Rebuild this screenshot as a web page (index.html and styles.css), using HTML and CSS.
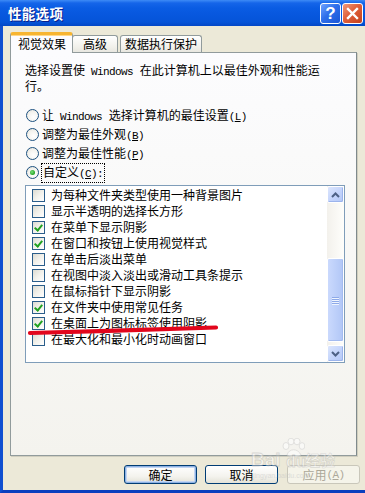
FILE: index.html
```html
<!DOCTYPE html>
<html lang="zh-CN">
<head>
<meta charset="utf-8">
<title>性能选项</title>
<link rel="stylesheet" href="styles.css">
</head>
<body>
<div class="window">
  <header class="titlebar">
    <span class="title">性能选项</span>
    <div class="caption-btns">
      <span class="cap-btn help">?</span>
      <span class="cap-btn close"><svg width="13" height="13" viewBox="0 0 13 13"><path d="M2 2 L11 11 M11 2 L2 11" stroke="#fff" stroke-width="2.4" stroke-linecap="square"/></svg></span>
    </div>
  </header>
  <main class="client">
    <nav class="tabs">
      <span class="tab active">视觉效果</span>
      <span class="tab t2">高级</span>
      <span class="tab t3">数据执行保护</span>
    </nav>
    <section class="panel">
      <p class="desc">选择设置使<span class="lat sp">Windows</span>在此计算机上以最佳外观和性能运行。</p>
      <div class="radios">
        <div class="radio"><span class="rb"></span><span class="rl">让<span class="lat sp">Windows</span>选择计算机的最佳设置<span class="lat">(<u>L</u>)</span></span></div>
        <div class="radio"><span class="rb"></span><span class="rl">调整为最佳外观<span class="lat">(<u>B</u>)</span></span></div>
        <div class="radio"><span class="rb"></span><span class="rl">调整为最佳性能<span class="lat">(<u>P</u>)</span></span></div>
        <div class="radio"><span class="rb on"></span><span class="rl focus">自定义<span class="lat">(<u>C</u>):</span></span></div>
      </div>
      <div class="listbox">
        <ul class="items">
          <li class="item"><span class="cb"></span>为每种文件夹类型使用一种背景图片</li>
          <li class="item"><span class="cb"></span>显示半透明的选择长方形</li>
          <li class="item"><span class="cb on"></span>在菜单下显示阴影</li>
          <li class="item"><span class="cb on"></span>在窗口和按钮上使用视觉样式</li>
          <li class="item"><span class="cb"></span>在单击后淡出菜单</li>
          <li class="item"><span class="cb"></span>在视图中淡入淡出或滑动工具条提示</li>
          <li class="item"><span class="cb"></span>在鼠标指针下显示阴影</li>
          <li class="item"><span class="cb on"></span>在文件夹中使用常见任务</li>
          <li class="item"><span class="cb on"></span>在桌面上为图标标签使用阴影</li>
          <li class="item"><span class="cb"></span>在最大化和最小化时动画窗口</li>
        </ul>
        <div class="scrollbar">
          <span class="sb-btn"><svg width="9" height="6" viewBox="0 0 9 6"><path d="M1 5 L4.5 1.5 L8 5" fill="none" stroke="#4D6185" stroke-width="2"/></svg></span>
          <span class="sb-gap"></span>
          <span class="sb-thumb"><i></i><i></i><i></i><i></i></span>
          <span class="sb-rest"></span>
          <span class="sb-btn"><svg width="9" height="6" viewBox="0 0 9 6"><path d="M1 1 L4.5 4.5 L8 1" fill="none" stroke="#4D6185" stroke-width="2"/></svg></span>
        </div>
      </div>
    </section>
    <footer class="buttons">
      <span class="btn default">确定</span>
      <span class="btn">取消</span>
      <span class="btn disabled">应用<span class="lat">(<u>A</u>)</span></span>
    </footer>
  </main>
  <div class="watermark">
    <span class="wm-bai">Bai</span>
    <svg class="wm-paw" width="24" height="20" viewBox="0 0 24 20"><g fill="#fff" stroke="#cfcfcf" stroke-width="1"><ellipse cx="5" cy="8" rx="3" ry="3.5"/><ellipse cx="10" cy="3.5" rx="3" ry="3.3"/><ellipse cx="16" cy="3.5" rx="3" ry="3.3"/><ellipse cx="21" cy="8" rx="2.8" ry="3.4"/><path d="M6 17 C8 10 17 10 20 17 C17 20 9 20 6 17 Z"/></g></svg>
    <span class="wm-du">du</span>
    <span class="wm-jy">经验</span>
    <span class="wm-url">jingyan.baidu.com</span>
  </div>
  <svg class="annot" width="365" height="493" viewBox="0 0 365 493"><path d="M30 333 C 90 331.5, 160 329.5, 216 327.5" fill="none" stroke="#E2061C" stroke-width="4.2" stroke-linecap="round"/></svg>
</div>
</body>
</html>
```

FILE: styles.css
```css
* { box-sizing: border-box; }
html, body { margin: 0; padding: 0; }
body {
  width: 365px;
  height: 493px;
  overflow: hidden;
  background: #ECE9D8;
  font-family: "Noto Sans CJK SC", "Noto Sans", sans-serif;
  font-size: 12px;
  color: #000;
}
.window {
  position: relative;
  width: 365px;
  height: 493px;
  background: #ECE9D8;
  border-left: 3px solid #0F4FD0;
  border-bottom: 3px solid #0A3FBE;
  display: flex;
  flex-direction: column;
}
.titlebar {
  height: 26px;
  margin-left: -3px;
  flex: none;
  display: flex;
  align-items: center;
  justify-content: space-between;
  padding: 0 2px 0 8px;
  background: linear-gradient(#3D8BF6 0, #1565E9 3px, #0A5CE3 8px, #0757DE 15px, #0554D8 22px, #0347C6 26px);
}
.title {
  color: #fff;
  font-weight: bold;
  font-size: 13.5px;
  line-height: 16px;
  letter-spacing: 0.3px;
  text-shadow: 1px 1px 0 #0A1F8A;
}
.caption-btns { display: flex; gap: 1px; }
.cap-btn {
  width: 21px;
  height: 21px;
  border: 1px solid #fff;
  border-radius: 3px;
  display: flex;
  align-items: center;
  justify-content: center;
  color: #fff;
}
.help {
  background: linear-gradient(135deg, #6FA3FF 0%, #2E6FEA 45%, #1A55D6 100%);
  font-family: "Liberation Sans", sans-serif;
  font-weight: bold;
  font-size: 17px;
  line-height: 19px;
}
.close {
  background: linear-gradient(135deg, #F09A7A 0%, #E0603A 45%, #C4401B 100%);
}
.client {
  flex: 1;
  display: flex;
  flex-direction: column;
  padding: 6px 0 0 7px;
}
.tabs {
  display: flex;
  align-items: flex-end;
  height: 20px;
  position: relative;
  z-index: 2;
}
.tab {
  height: 17px;
  border: 1px solid #919B9C;
  border-bottom: none;
  border-radius: 3px 3px 0 0;
  background: linear-gradient(#FFFFFF, #F1F0EA 70%, #E8E7E0);
  line-height: 16px;
  text-align: center;
  font-size: 12px;
}
.tab.active {
  width: 63px;
  height: 21px;
  margin-bottom: -1px;
  background: #FCFCFE;
  border-top: 3px solid #F7B531;
  line-height: 18px;
  padding-left: 1px;
  box-shadow: inset 0 1px 0 #FFD888;
}
.t2 { width: 46px; margin-left: -1px; }
.t3 { width: 82px; margin-left: 2px; }
.panel {
  width: 347px;
  height: 404px;
  border: 1px solid #919B9C;
  border-right-color: #7F8A8C;
  box-shadow: 1px 1px 0 #D0CEBF;
  background: linear-gradient(#FCFCFE, #F8F8F6 50%, #F4F3EE);
  padding: 10px 0 0 14px;
  position: relative;
  z-index: 1;
}
.lat {
  font-family: "Liberation Mono", monospace;
  font-size: 11px;
  letter-spacing: -0.6px;
  white-space: nowrap;
}
.lat.sp { margin: 0 6.6px 0 6px; }
.desc {
  margin: 0;
  width: 300px;
  line-height: 14px;
}
.radios {
  margin-top: 13px;
  display: flex;
  flex-direction: column;
}
.radio {
  height: 19px;
  display: flex;
  align-items: center;
  padding-left: 1px;
  line-height: 16px;
}
.rb {
  width: 13px;
  height: 13px;
  border-radius: 50%;
  border: 1px solid #1C5180;
  background: radial-gradient(circle at 60% 65%, #FFFFFF 0, #F4F3EE 55%, #DCDBD2 100%);
  margin-right: 3px;
  flex: none;
  display: flex;
  align-items: center;
  justify-content: center;
}
.rb.on::after {
  content: "";
  width: 5px;
  height: 5px;
  border-radius: 50%;
  background: radial-gradient(circle at 40% 40%, #7BE07B, #21A121 70%, #1A8A1A);
}
.focus {
  outline: 1px dotted #000;
  outline-offset: 0;
  padding: 0 1px;
}
.listbox {
  margin-top: 3px;
  width: 320px;
  height: 178px;
  border: 1px solid #7F9DB9;
  background: #fff;
  display: flex;
}
.items {
  list-style: none;
  margin: 0;
  padding: 1px 0 0 6px;
  flex: 1;
}
.item {
  height: 16px;
  display: flex;
  align-items: center;
  line-height: 16px;
  white-space: nowrap;
}
.cb {
  width: 13px;
  height: 13px;
  border: 1px solid #2A5D8A;
  background: linear-gradient(135deg, #DCDBD2 0%, #F2F1EB 50%, #FFFFFF 100%);
  margin-right: 6px;
  flex: none;
  position: relative;
}
.cb.on::after {
  content: "";
  position: absolute;
  left: 3px;
  top: 1px;
  width: 3px;
  height: 6px;
  border-right: 2px solid #21A121;
  border-bottom: 2px solid #21A121;
  transform: rotate(40deg);
}
.scrollbar {
  width: 17px;
  flex: none;
  display: flex;
  flex-direction: column;
  background: linear-gradient(90deg, #F3F1EC, #FEFEFB);
}
.sb-btn {
  height: 17px;
  flex: none;
  border: 1px solid #fff;
  border-radius: 2px;
  background: linear-gradient(135deg, #DCE6FD, #C1D2FB 60%, #B4C8F6);
  box-shadow: inset -1px -1px 0 #9CB4EC;
  display: flex;
  align-items: center;
  justify-content: center;
}
.sb-gap { height: 55px; flex: none; }
.sb-thumb {
  height: 84px;
  flex: none;
  border: 1px solid #fff;
  border-radius: 2px;
  background: linear-gradient(90deg, #CAD9FD, #BBCEF9 60%, #B1C6F6);
  box-shadow: inset -1px -1px 0 #A3BBF0;
  display: flex;
  flex-direction: column;
  align-items: center;
  justify-content: center;
  gap: 1px;
}
.sb-thumb i {
  display: block;
  width: 7px;
  height: 1px;
  background: #8DA9E8;
  box-shadow: 0 1px 0 #EEF4FE;
}
.sb-rest { flex: 1; }
.buttons {
  margin-top: 9px;
  height: 19px;
  display: flex;
  justify-content: flex-end;
  gap: 8px;
  padding-right: 5px;
}
.btn {
  width: 73px;
  height: 19px;
  border: 1px solid #003C74;
  border-radius: 3px;
  background: linear-gradient(#FFFFFF, #F4F3EE 60%, #E4E2D8);
  display: flex;
  align-items: center;
  justify-content: center;
  font-size: 12px;
  line-height: 16px;
}
.btn.default {
  box-shadow: inset 0 0 0 1px #8DB2E3, inset 0 0 0 2px #C3D5F2;
}
.btn.disabled {
  border-color: #C9C7BA;
  color: #ACA899;
  background: #F5F4EA;
  margin-left: 1px;
}
.watermark {
  position: absolute;
  left: 246px;
  top: 436px;
  width: 100px;
  height: 48px;
  pointer-events: none;
  opacity: 0.5;
  z-index: 3;
}
.wm-bai, .wm-du {
  position: absolute;
  font-family: "Liberation Sans", sans-serif;
  font-weight: bold;
  font-size: 19px;
  color: #fff;
  -webkit-text-stroke: 0.8px #BDBDBD;
  line-height: 20px;
}
.wm-bai { left: 2px; top: 14px; }
.wm-paw { position: absolute; left: 32px; top: 2px; }
.wm-du { left: 37px; top: 16px; font-size: 16px; }
.wm-jy {
  position: absolute;
  left: 56px;
  top: 15px;
  font-size: 15px;
  font-weight: bold;
  color: #fff;
  -webkit-text-stroke: 0.6px #BDBDBD;
  line-height: 18px;
}
.wm-url {
  position: absolute;
  left: 4px;
  top: 35px;
  font-family: "Liberation Sans", sans-serif;
  font-size: 7px;
  color: #C4C4C4;
  line-height: 9px;
}
.annot {
  position: absolute;
  left: -3px;
  top: 0;
  pointer-events: none;
  z-index: 4;
}
```
